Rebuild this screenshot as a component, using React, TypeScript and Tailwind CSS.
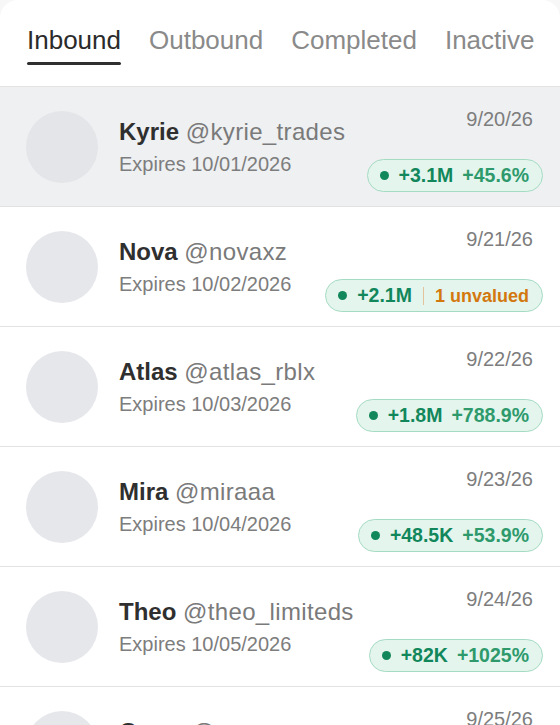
import React from "react";

type Row = {
  name: string;
  handle: string;
  expires: string;
  date: string;
  value: string;
  extra: string;
  unvalued?: boolean;
};

const rows: Row[] = [
  { name: "Kyrie", handle: "@kyrie_trades", expires: "10/01/2026", date: "9/20/26", value: "+3.1M", extra: "+45.6%" },
  { name: "Nova", handle: "@novaxz", expires: "10/02/2026", date: "9/21/26", value: "+2.1M", extra: "1 unvalued", unvalued: true },
  { name: "Atlas", handle: "@atlas_rblx", expires: "10/03/2026", date: "9/22/26", value: "+1.8M", extra: "+788.9%" },
  { name: "Mira", handle: "@miraaa", expires: "10/04/2026", date: "9/23/26", value: "+48.5K", extra: "+53.9%" },
  { name: "Theo", handle: "@theo_limiteds", expires: "10/05/2026", date: "9/24/26", value: "+82K", extra: "+1025%" },
  { name: "Owen", handle: "@owen_rap", expires: "10/06/2026", date: "9/25/26", value: "+12K", extra: "+9.2%" },
];

const tabs = ["Inbound", "Outbound", "Completed", "Inactive"];

export default function App() {
  return (
    <div
      className="w-[560px] h-[725px] overflow-hidden bg-[#f7f7f7]"
      style={{ fontFamily: '"Liberation Sans", Arial, sans-serif' }}
    >
      <div className="bg-white rounded-t-[18px] h-full">
        <div className="h-[87px] border-b border-[#e3e3e3] flex gap-[28px] pl-[27px] pt-[25px]">
          {tabs.map((t, i) => (
            <div key={t} className="flex flex-col">
              <span
                className={
                  "text-[26px] leading-[30px] " +
                  (i === 0 ? "text-[#2b2b2b]" : "text-[#8a8a8a]")
                }
              >
                {t}
              </span>
              {i === 0 && <div className="mt-[7px] h-[3px] bg-[#2f2f2f] rounded-sm" />}
            </div>
          ))}
        </div>
        {rows.map((r, i) => (
          <div
            key={r.name}
            className={
              "h-[120px] flex items-center border-b border-[#e2e2e2] pl-[26px] pr-[17px] " +
              (i === 0 ? "bg-[#eef0f2]" : "bg-white")
            }
          >
            <div
              className={
                "w-[72px] h-[72px] rounded-full shrink-0 " +
                (i === 0 ? "bg-[#e3e5e8]" : "bg-[#e5e7eb]")
              }
            />
            <div className="ml-[21px] flex flex-col flex-1 min-w-0">
              <div className="text-[24px] leading-[28px] whitespace-nowrap">
                <span className="font-bold text-[#2f2f2f]">{r.name}</span>{" "}
                <span className="text-[#7a7a7a] tracking-[0.35px]">{r.handle}</span>
              </div>
              <div className="mt-[6px] text-[20px] leading-[24px] text-[#7d7d7d]">
                Expires {r.expires}
              </div>
            </div>
            <div className="self-stretch flex flex-col items-end justify-between pt-[20px] pb-[14px]">
              <div className="text-[20px] leading-[24px] text-[#7d7d7d] pr-[10px]">{r.date}</div>
              <div className="h-[33px] flex items-center rounded-full border border-[#a5dbc3] bg-[#e4f5ed] pl-[12px] pr-[13px]">
                <span className="w-[9px] h-[9px] rounded-full bg-[#12875c]" />
                <span className="ml-[10px] text-[19.5px] font-bold text-[#12875c] leading-none">{r.value}</span>
                {r.unvalued ? (
                  <>
                    <span className="mx-[11px] w-px h-[18px] bg-[#e3c49a]" />
                    <span className="text-[18px] font-bold text-[#d3780f] leading-none">{r.extra}</span>
                  </>
                ) : (
                  <span className="ml-[9px] text-[19.5px] font-bold text-[#2e9a6c] leading-none">{r.extra}</span>
                )}
              </div>
            </div>
          </div>
        ))}
      </div>
    </div>
  );
}
